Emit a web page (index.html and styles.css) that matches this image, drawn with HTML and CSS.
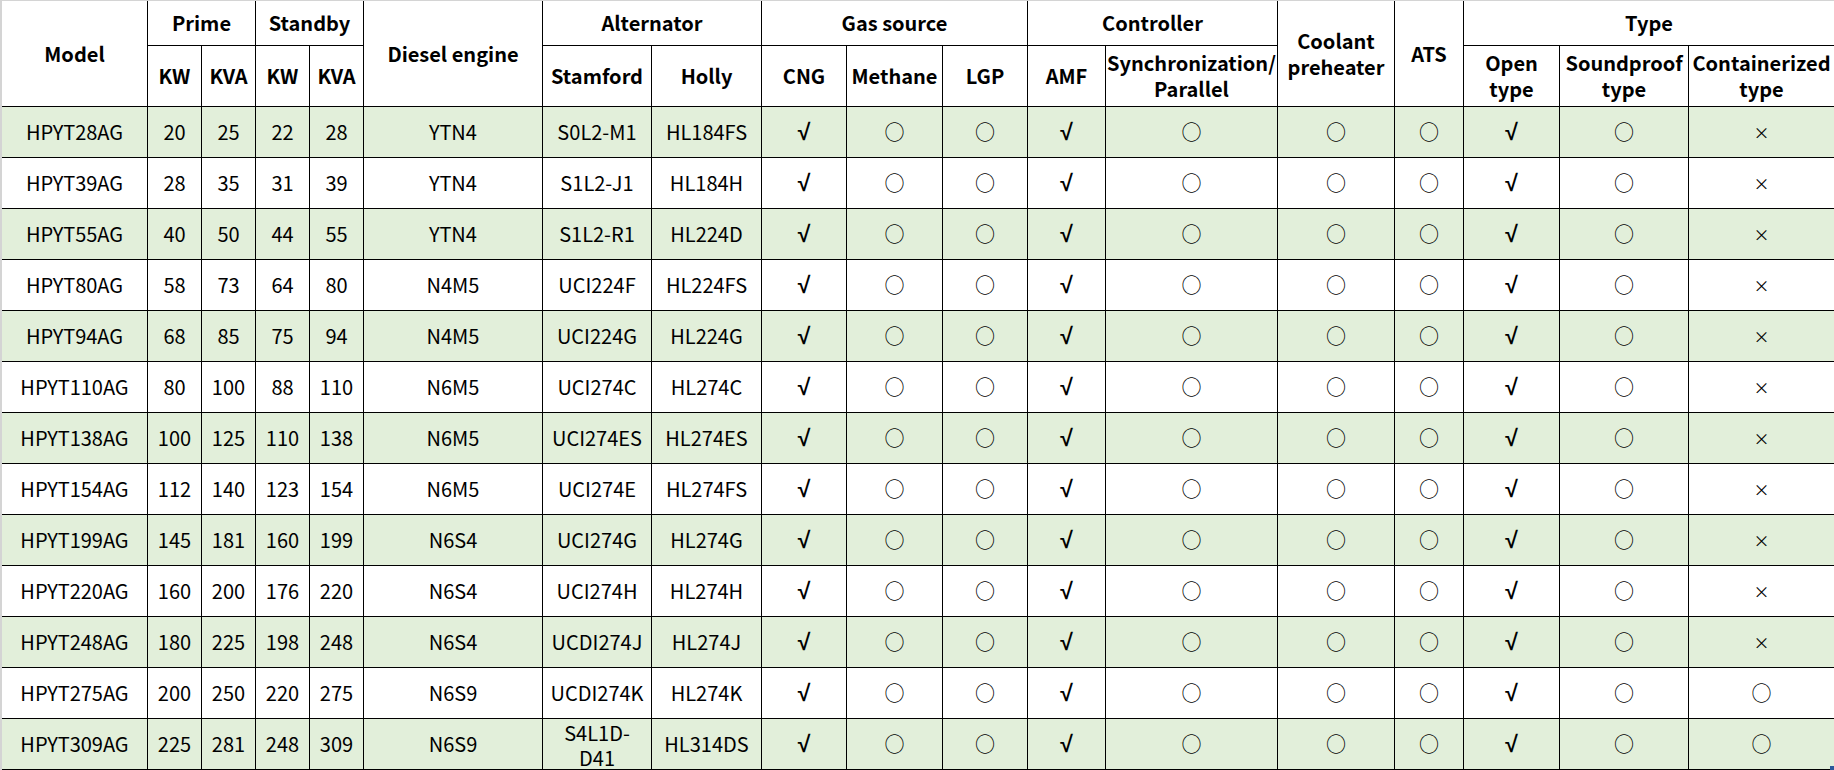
FILE: index.html
```html
<!DOCTYPE html>
<html lang="en">
<head>
<meta charset="utf-8">
<title>HPYT gas generator sets</title>
<link rel="stylesheet" href="styles.css">
</head>
<body>
<div class="sheet">
  <div class="h c-model r-span">Model</div>
  <div class="h c-prime">Prime</div>
  <div class="h c-standby">Standby</div>
  <div class="h c-engine r-span">Diesel engine</div>
  <div class="h c-alt">Alternator</div>
  <div class="h c-gas">Gas source</div>
  <div class="h c-ctrl">Controller</div>
  <div class="h c-cool r-span"><span class="lines"><span>Coolant</span> <span>preheater</span></span></div>
  <div class="h c-ats r-span">ATS</div>
  <div class="h c-type">Type</div>

  <div class="h">KW</div>
  <div class="h">KVA</div>
  <div class="h">KW</div>
  <div class="h">KVA</div>
  <div class="h">Stamford</div>
  <div class="h">Holly</div>
  <div class="h">CNG</div>
  <div class="h">Methane</div>
  <div class="h">LGP</div>
  <div class="h">AMF</div>
  <div class="h"><span class="lines"><span>Synchronization/</span> <span>Parallel</span></span></div>
  <div class="h"><span class="lines"><span>Open</span> <span>type</span></span></div>
  <div class="h"><span class="lines"><span>Soundproof</span> <span>type</span></span></div>
  <div class="h"><span class="lines"><span>Containerized</span> <span>type</span></span></div>

  <div class="row g"><div>HPYT28AG</div><div>20</div><div>25</div><div>22</div><div>28</div><div>YTN4</div><div>S0L2-M1</div><div>HL184FS</div><div class="ck">√</div><div class="o">○</div><div class="o">○</div><div class="ck">√</div><div class="o">○</div><div class="o">○</div><div class="o">○</div><div class="ck">√</div><div class="o">○</div><div class="x">×</div></div>
  <div class="row"><div>HPYT39AG</div><div>28</div><div>35</div><div>31</div><div>39</div><div>YTN4</div><div>S1L2-J1</div><div>HL184H</div><div class="ck">√</div><div class="o">○</div><div class="o">○</div><div class="ck">√</div><div class="o">○</div><div class="o">○</div><div class="o">○</div><div class="ck">√</div><div class="o">○</div><div class="x">×</div></div>
  <div class="row g"><div>HPYT55AG</div><div>40</div><div>50</div><div>44</div><div>55</div><div>YTN4</div><div>S1L2-R1</div><div>HL224D</div><div class="ck">√</div><div class="o">○</div><div class="o">○</div><div class="ck">√</div><div class="o">○</div><div class="o">○</div><div class="o">○</div><div class="ck">√</div><div class="o">○</div><div class="x">×</div></div>
  <div class="row"><div>HPYT80AG</div><div>58</div><div>73</div><div>64</div><div>80</div><div>N4M5</div><div>UCI224F</div><div>HL224FS</div><div class="ck">√</div><div class="o">○</div><div class="o">○</div><div class="ck">√</div><div class="o">○</div><div class="o">○</div><div class="o">○</div><div class="ck">√</div><div class="o">○</div><div class="x">×</div></div>
  <div class="row g"><div>HPYT94AG</div><div>68</div><div>85</div><div>75</div><div>94</div><div>N4M5</div><div>UCI224G</div><div>HL224G</div><div class="ck">√</div><div class="o">○</div><div class="o">○</div><div class="ck">√</div><div class="o">○</div><div class="o">○</div><div class="o">○</div><div class="ck">√</div><div class="o">○</div><div class="x">×</div></div>
  <div class="row"><div>HPYT110AG</div><div>80</div><div>100</div><div>88</div><div>110</div><div>N6M5</div><div>UCI274C</div><div>HL274C</div><div class="ck">√</div><div class="o">○</div><div class="o">○</div><div class="ck">√</div><div class="o">○</div><div class="o">○</div><div class="o">○</div><div class="ck">√</div><div class="o">○</div><div class="x">×</div></div>
  <div class="row g"><div>HPYT138AG</div><div>100</div><div>125</div><div>110</div><div>138</div><div>N6M5</div><div>UCI274ES</div><div>HL274ES</div><div class="ck">√</div><div class="o">○</div><div class="o">○</div><div class="ck">√</div><div class="o">○</div><div class="o">○</div><div class="o">○</div><div class="ck">√</div><div class="o">○</div><div class="x">×</div></div>
  <div class="row"><div>HPYT154AG</div><div>112</div><div>140</div><div>123</div><div>154</div><div>N6M5</div><div>UCI274E</div><div>HL274FS</div><div class="ck">√</div><div class="o">○</div><div class="o">○</div><div class="ck">√</div><div class="o">○</div><div class="o">○</div><div class="o">○</div><div class="ck">√</div><div class="o">○</div><div class="x">×</div></div>
  <div class="row g"><div>HPYT199AG</div><div>145</div><div>181</div><div>160</div><div>199</div><div>N6S4</div><div>UCI274G</div><div>HL274G</div><div class="ck">√</div><div class="o">○</div><div class="o">○</div><div class="ck">√</div><div class="o">○</div><div class="o">○</div><div class="o">○</div><div class="ck">√</div><div class="o">○</div><div class="x">×</div></div>
  <div class="row"><div>HPYT220AG</div><div>160</div><div>200</div><div>176</div><div>220</div><div>N6S4</div><div>UCI274H</div><div>HL274H</div><div class="ck">√</div><div class="o">○</div><div class="o">○</div><div class="ck">√</div><div class="o">○</div><div class="o">○</div><div class="o">○</div><div class="ck">√</div><div class="o">○</div><div class="x">×</div></div>
  <div class="row g"><div>HPYT248AG</div><div>180</div><div>225</div><div>198</div><div>248</div><div>N6S4</div><div>UCDI274J</div><div>HL274J</div><div class="ck">√</div><div class="o">○</div><div class="o">○</div><div class="ck">√</div><div class="o">○</div><div class="o">○</div><div class="o">○</div><div class="ck">√</div><div class="o">○</div><div class="x">×</div></div>
  <div class="row"><div>HPYT275AG</div><div>200</div><div>250</div><div>220</div><div>275</div><div>N6S9</div><div>UCDI274K</div><div>HL274K</div><div class="ck">√</div><div class="o">○</div><div class="o">○</div><div class="ck">√</div><div class="o">○</div><div class="o">○</div><div class="o">○</div><div class="ck">√</div><div class="o">○</div><div class="o">○</div></div>
  <div class="row g"><div>HPYT309AG</div><div>225</div><div>281</div><div>248</div><div>309</div><div>N6S9</div><div class="tight"><span class="lines"><span>S4L1D-</span><span>D41</span></span></div><div>HL314DS</div><div class="ck">√</div><div class="o">○</div><div class="o">○</div><div class="ck">√</div><div class="o">○</div><div class="o">○</div><div class="o">○</div><div class="ck">√</div><div class="o">○</div><div class="o">○</div></div>
  <div class="handle"></div>
</div>
</body>
</html>
```

FILE: styles.css
```css
html, body {
  margin: 0;
  padding: 0;
  background: #ffffff;
}

.sheet {
  position: relative;
  width: 1834px;
  height: 770px;
  box-sizing: border-box;
  display: grid;
  grid-template-columns: 145px 53px 53px 53px 53px 178px 108px 109px 84px 95px 84px 77px 171px 116px 68px 95px 128px 145px;
  grid-template-rows: 44px 60px repeat(13, 50px);
  gap: 1px;
  background: #000000;
  border-top: 1px solid #d4d4d4;
  border-left: 2px solid #d4d4d4;
  padding-bottom: 1px;
  font-family: "Noto Sans CJK SC", "Noto Sans", sans-serif;
  font-size: 20px;
  color: #000000;
}

.sheet > .h,
.row > div {
  background: #ffffff;
  display: flex;
  align-items: center;
  justify-content: center;
  text-align: center;
  line-height: 26px;
  white-space: nowrap;
}

.sheet > .row {
  display: contents;
}

.row.g > div {
  background: #e2efda;
}

.h {
  font-weight: 700;
}

.r-span { grid-row: span 2; }
.c-prime, .c-standby, .c-alt { grid-column: span 2; }
.c-gas, .c-type { grid-column: span 3; }
.c-ctrl { grid-column: span 2; }

.lines > span {
  display: block;
}

.row > .tight {
  line-height: 25px;
  padding-top: 1px;
}

.row > .ck {
  font-family: "Liberation Sans", "DejaVu Sans", sans-serif;
  font-size: 23px;
  font-weight: 700;
}

.row > .x {
  font-size: 16px;
}

.sheet > .handle {
  position: absolute;
  right: 0;
  bottom: 0;
  width: 4px;
  height: 4px;
  background: #2b579a;
}
```
